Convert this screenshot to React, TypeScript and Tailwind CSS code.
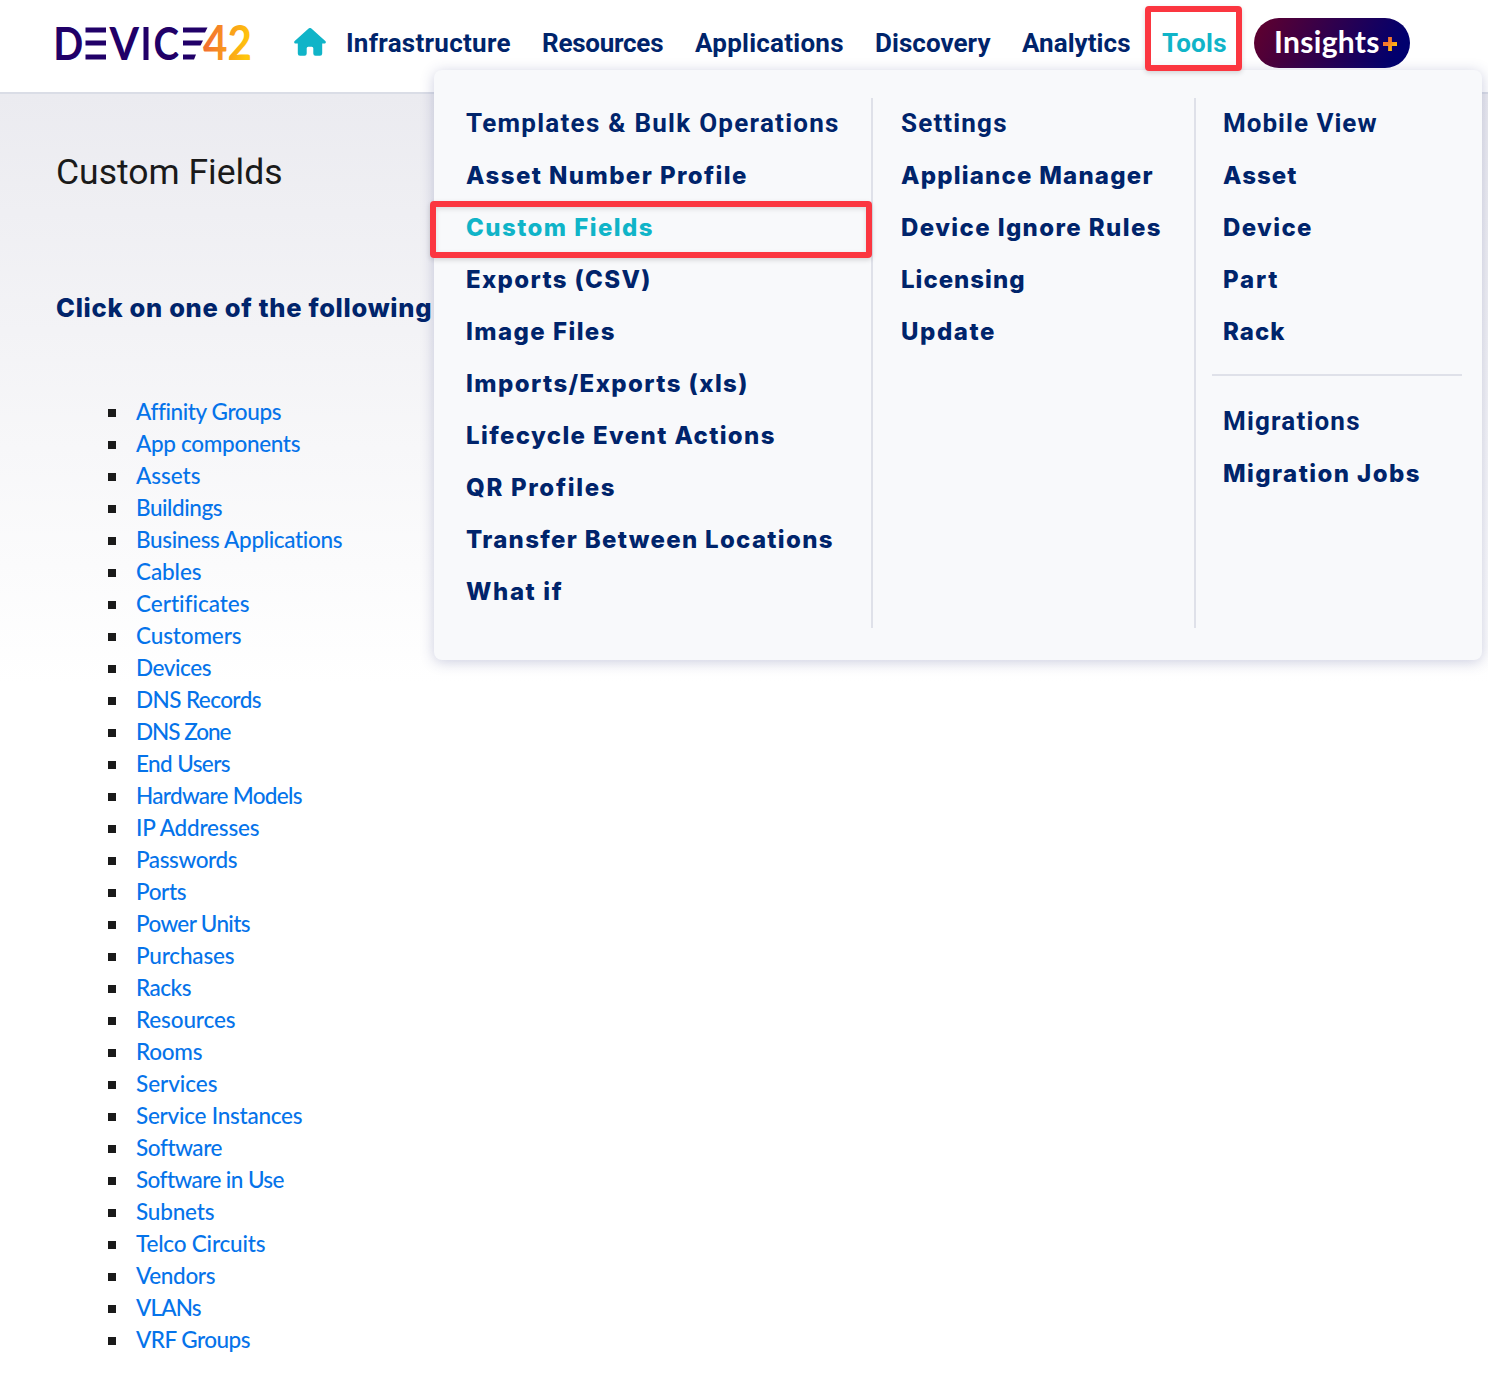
import React, { useLayoutEffect, useRef, useState } from 'react';

type Entry = [label: string, width: number];

const navItems: Entry[] = [
  ['Infrastructure', 164],
  ['Resources', 121],
  ['Applications', 148],
  ['Discovery', 115],
  ['Analytics', 108],
];

const bulkItems: Entry[] = [
  ['Asset Number Profile', 280],
  ['Custom Fields', 186],
  ['Exports (CSV)', 184],
  ['Image Files', 148],
  ['Imports/Exports (xls)', 281],
  ['Lifecycle Event Actions', 308],
  ['QR Profiles', 148],
  ['Transfer Between Locations', 366],
  ['What if', 95],
];

const settingsItems: Entry[] = [
  ['Appliance Manager', 251],
  ['Device Ignore Rules', 259],
  ['Licensing', 123],
  ['Update', 93],
];

const mobileItems: Entry[] = [
  ['Asset', 73],
  ['Device', 88],
  ['Part', 54],
  ['Rack', 61],
];

const fieldLinks: Entry[] = [
  ['Affinity Groups', 145],
  ['App components', 164],
  ['Assets', 64],
  ['Buildings', 86],
  ['Business Applications', 206],
  ['Cables', 65],
  ['Certificates', 113],
  ['Customers', 105],
  ['Devices', 75],
  ['DNS Records', 125],
  ['DNS Zone', 95],
  ['End Users', 94],
  ['Hardware Models', 166],
  ['IP Addresses', 123],
  ['Passwords', 101],
  ['Ports', 50],
  ['Power Units', 114],
  ['Purchases', 98],
  ['Racks', 55],
  ['Resources', 99],
  ['Rooms', 66],
  ['Services', 81],
  ['Service Instances', 166],
  ['Software', 86],
  ['Software in Use', 148],
  ['Subnets', 78],
  ['Telco Circuits', 129],
  ['Vendors', 79],
  ['VLANs', 65],
  ['VRF Groups', 114],
];

/** Single-line label whose tracking is adjusted so that it fills the given width. */
function Label({ text, width, className = '' }: { text: string; width: number; className?: string }) {
  const ref = useRef<HTMLSpanElement>(null);
  const [spacing, setSpacing] = useState(0);

  useLayoutEffect(() => {
    const el = ref.current;
    if (!el) return;
    el.style.letterSpacing = '0.001px';
    const natural = el.getBoundingClientRect().width;
    const next = (width + 0.5 - natural) / (text.length - 1);
    el.style.letterSpacing = `${next}px`;
    setSpacing(next);
  }, [text, width]);

  return (
    <span className="block shrink-0 whitespace-nowrap" style={{ width }}>
      <span ref={ref} className={`inline-block ${className}`} style={{ letterSpacing: spacing }}>
        {text}
      </span>
    </span>
  );
}

function Logo() {
  return (
    <svg width="208" height="92" viewBox="-6 -25 208 92" className="block shrink-0" aria-label="Device42">
      <defs>
        <linearGradient id="logo-warm" gradientUnits="userSpaceOnUse" x1="148" y1="0" x2="194" y2="8">
          <stop offset="0.1" stopColor="#f36f2f" />
          <stop offset="1" stopColor="#ffc60b" />
        </linearGradient>
      </defs>
      <g fill="#210068" fontFamily="Lato, sans-serif" fontWeight="700" fontSize="46">
        <text x="-2.800" y="35" textLength="30" lengthAdjust="spacingAndGlyphs">D</text>
        <text x="53.500" y="35" textLength="29.500" lengthAdjust="spacingAndGlyphs">V</text>
        <text x="97.500" y="35" textLength="25.500" lengthAdjust="spacingAndGlyphs">C</text>
      </g>
      <g fill="#210068">
        <rect x="29.500" y="2.500" width="20.500" height="5" />
        <rect x="29.500" y="15.500" width="20.500" height="5" />
        <rect x="29.500" y="29.500" width="20.500" height="5" />
        <rect x="87.500" y="2" width="5" height="33" />
        <polygon points="127,2.500 151.500,2.500 149,7.500 127,7.500" />
        <polygon points="127,15.500 147,15.500 144.500,20.500 127,20.500" />
        <polygon points="127,29.500 140,29.500 138,34.500 127,34.500" />
      </g>
      <text
        x="147"
        y="35.200"
        textLength="49"
        lengthAdjust="spacingAndGlyphs"
        fill="url(#logo-warm)"
        fontFamily="Lato, sans-serif"
        fontWeight="700"
        fontSize="47"
      >
        42
      </text>
    </svg>
  );
}

function HomeIcon() {
  return (
    <svg width="32" height="28" viewBox="0 0 32 28" className="block shrink-0" fill="#10b4c8">
      <path d="M14.600.6a2 2 0 0 1 2.800 0L31.300 13c1.100 1 .4 2.600-1 2.600H28.200v9.900a2.200 2.200 0 0 1-2.200 2.200h-4.500a2.200 2.200 0 0 1-2.200-2.200v-5.300a1.500 1.500 0 0 0-1.500-1.500h-3.600a1.500 1.500 0 0 0-1.500 1.500v5.300a2.200 2.200 0 0 1-2.200 2.200H6a2.200 2.200 0 0 1-2.200-2.200v-9.900H1.700c-1.400 0-2.100-1.600-1-2.600z" />
    </svg>
  );
}

function InsightsButton() {
  return (
    <div className="ml-7 flex h-[50px] w-[156px] shrink-0 items-start rounded-full bg-linear-[115deg,#5c0030_5%,#2b0050_50%,#00006e_90%] pl-5">
      <Label text="Insights" width={105} className="font-['Lato'] text-[30px] leading-[47px] font-bold text-white" />
      <svg width="16" height="16" viewBox="0 0 16 16" className="mt-[18px] ml-[3px] block">
        <defs>
          <linearGradient id="plus-warm" x1="0" y1="0" x2="1" y2="1">
            <stop offset="0.4" stopColor="#f5792c" />
            <stop offset="0.8" stopColor="#ffc60b" />
          </linearGradient>
        </defs>
        <path d="M6.100 1h3.800v5.100h5.100v3.800h-5.100v5.100h-3.800v-5.100h-5.100v-3.800h5.100z" fill="url(#plus-warm)" />
      </svg>
    </div>
  );
}

function MenuHeading({ text, width }: { text: string; width: number }) {
  return (
    <h2 className="h-[52px]">
      <Label text={text} width={width} className="font-['Roboto'] text-[26px] leading-[50px] font-bold" />
    </h2>
  );
}

function MenuList({ items }: { items: Entry[] }) {
  return (
    <ul>
      {items.map(([label, width]) => (
        <li key={label} className={`relative h-[52px] ${label === 'Custom Fields' ? 'text-[#10b4c8]' : ''}`}>
          <Label text={label} width={width} className="font-['Inter'] text-[24px] leading-[51px] font-extrabold" />
          {label === 'Custom Fields' && (
            <span className="absolute -top-px -left-[36px] h-[57px] w-[442px] rounded-[4px] border-6 border-[#fb3640] shadow-[0_2px_5px_rgba(0,0,0,0.15),inset_0_2px_5px_rgba(0,0,0,0.12)]" />
          )}
        </li>
      ))}
    </ul>
  );
}

function ToolsMenu() {
  return (
    <div className="absolute top-[70px] left-[434px] flex h-[590px] w-[1048px] rounded-lg bg-[#f8f9fb] pt-7 pb-8 shadow-[0_2px_14px_rgba(50,60,130,0.25)]">
      <section className="w-[439px] border-r-2 border-[#dfe1e9] pl-8">
        <MenuHeading text="Templates & Bulk Operations" width={372} />
        <MenuList items={bulkItems} />
      </section>
      <section className="w-[323px] border-r-2 border-[#dfe1e9] pl-7">
        <MenuHeading text="Settings" width={105} />
        <MenuList items={settingsItems} />
      </section>
      <section className="flex-1 pr-5 pl-4">
        <div className="pl-[11px]">
          <MenuHeading text="Mobile View" width={153} />
          <MenuList items={mobileItems} />
        </div>
        <hr className="mt-4 mb-5 border-t-2 border-[#dfe1e9]" />
        <div className="pl-[11px]">
          <MenuHeading text="Migrations" width={136} />
          <MenuList items={[['Migration Jobs', 196]]} />
        </div>
      </section>
    </div>
  );
}

export default function App() {
  return (
    <div className="relative h-[1384px] w-[1488px] overflow-hidden bg-white text-[#00246b]">
      <header className="flex h-[94px] border-b-2 border-[#dadde6] bg-white pl-[50px]">
        <Logo />
        <div className="mt-7 ml-9">
          <HomeIcon />
        </div>
        <nav className="mt-[18px] ml-5 flex h-[50px] gap-8">
          {navItems.map(([label, width]) => (
            <Label key={label} text={label} width={width} className="font-['Roboto'] text-[26px] leading-[50px] font-bold" />
          ))}
          <Label text="Tools" width={64} className="font-['Roboto'] text-[26px] leading-[50px] font-bold text-[#10b4c8]" />
        </nav>
        <div className="mt-[18px]">
          <InsightsButton />
        </div>
      </header>

      <main className="h-[1290px] bg-linear-[180deg,#ebebf0_0,#ffffff_590px] pl-14">
        <h1 className="pt-[52px] text-[#1a1a1a]">
          <Label text="Custom Fields" width={226} className="font-['Roboto'] text-[35.500px] leading-[52px]" />
        </h1>
        <div className="mt-[84px]">
          <Label text="Click on one of the following" width={375} className="font-['Inter'] text-[25.500px] leading-[52px] font-extrabold" />
        </div>
        <ul className="mt-[62px] pl-[52px]">
          {fieldLinks.map(([label, width]) => (
            <li key={label} className="flex h-8 items-center gap-5">
              <span className="mt-px size-2 bg-[#1a1a1a]" />
              <Label text={label} width={width} className="font-['Lato'] text-[22.500px] leading-8 font-medium text-[#0573ea]" />
            </li>
          ))}
        </ul>
      </main>

      <ToolsMenu />
      <span className="absolute top-[6px] left-[1145px] h-[65px] w-[97px] rounded-[4px] border-6 border-[#fb3640] shadow-[0_2px_5px_rgba(0,0,0,0.15)]" />
    </div>
  );
}
